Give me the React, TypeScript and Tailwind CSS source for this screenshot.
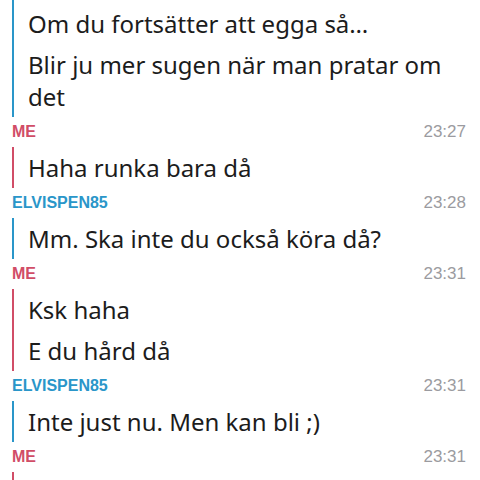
type Group = {
  from: "me" | "them";
  time?: string;
  messages: string[];
};

const groups: Group[] = [
  {
    from: "them",
    messages: ["Om du fortsätter att egga så…", "Blir ju mer sugen när man pratar om det"],
  },
  { from: "me", time: "23:27", messages: ["Haha runka bara då"] },
  { from: "them", time: "23:28", messages: ["Mm. Ska inte du också köra då?"] },
  { from: "me", time: "23:31", messages: ["Ksk haha", "E du hård då"] },
  { from: "them", time: "23:31", messages: ["Inte just nu. Men kan bli ;)"] },
  // last group is scrolled below the fold, only its bar shows
  { from: "me", time: "23:31", messages: [] },
];

function Label({ from, time }: { from: "me" | "them"; time: string }) {
  return (
    <div className="flex items-center justify-between pl-3 pr-[14px] py-[5px] leading-[20px] font-['Liberation_Sans',Arial,sans-serif]">
      <span
        className={
          from === "me"
            ? "text-[16px] font-bold text-[#d14d67]"
            : "text-[16px] font-bold text-[#2a96c9]"
        }
      >
        {from === "me" ? "ME" : "ELVISPEN85"}
      </span>
      <span className="text-[17px] text-[#9b9ba0]">{time}</span>
    </div>
  );
}

export default function App() {
  return (
    <div className="h-[480px] w-[480px] overflow-hidden bg-white">
      {groups.map((g, i) => (
        <div key={i}>
          {g.time ? <Label from={g.from} time={g.time} /> : null}
          <div
            className={
              (g.from === "me" ? "border-[#d14d67]" : "border-[#2a96c9]") +
              " ml-3 min-h-[41px] border-l-2 pl-[14px] pr-4" +
              (i === 0 ? " pt-[3px]" : "")
            }
          >
            {g.messages.map((m, j) => (
              <p
                key={j}
                className="pt-[5px] pb-[4px] text-[24px] leading-[32px] text-[#1c1c1c] font-['Noto_Sans',sans-serif]"
              >
                {m}
              </p>
            ))}
          </div>
        </div>
      ))}
    </div>
  );
}
